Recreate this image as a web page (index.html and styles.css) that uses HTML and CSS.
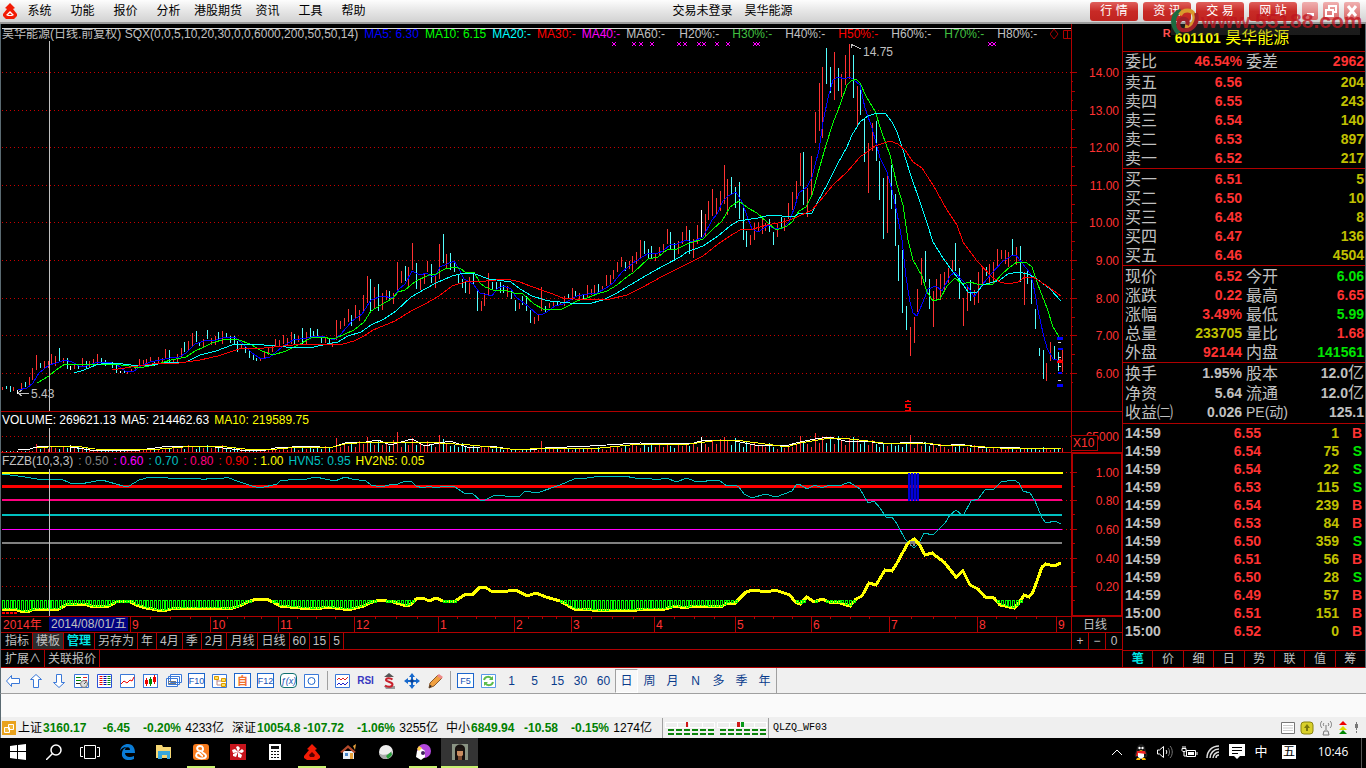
FILE: index.html
```html
<!DOCTYPE html>
<html lang="zh-CN">
<head>
    <meta charset="UTF-8">
    <meta name="viewport" content="width=device-width, initial-scale=1.0">
    <title>昊华能源</title>
    <link rel="stylesheet" href="styles.css">
</head>
<body>
    <header class="menubar">
        <svg class="logo" width="16" height="18" viewBox="0 0 16 18"><path d="M8 1l5 5-2 1 4 5v2l-3 3H4l-3-3v-2l4-5-2-1z" fill="#f21b05"/><path d="M4 13l4-4 4 4-2 1H6z" fill="#fff"/><path d="M6 13l2-2 2 2z" fill="#f21b05"/></svg>
        <nav class="menu">
            <button>系统</button><button>功能</button><button>报价</button><button>分析</button><button>港股期货</button><button>资讯</button><button>工具</button><button>帮助</button>
        </nav>
        <div class="caption"><span>交易未登录</span><span>昊华能源</span></div>
        <div class="window-buttons">
            <button class="tag">行 情</button><button class="tag">资 讯</button><button class="tag">交 易</button><button class="tag">网 站</button>
            <button class="win" aria-label="最小化"><svg width="16" height="16"><path d="M5 10h7v3H5z" fill="#fff"/></svg></button>
            <button class="win" aria-label="还原"><svg width="16" height="16" fill="none" stroke="#fff" stroke-width="2"><path d="M6 6V3h7v6h-3M3 7h7v6H3z"/></svg></button>
            <button class="win" aria-label="关闭"><svg width="16" height="16" stroke="#fff" stroke-width="3"><path d="M4 3l8 10M12 3L4 13"/></svg></button>
        </div>
        <div class="watermark">
            <svg width="28" height="30" viewBox="0 0 28 30" fill="none"><path d="M8 27C0 19 1 8 10 5" stroke="#1d6b41" stroke-width="5"/><path d="M9 9c3-6 12-6 14 0 2 7-3 12-9 11" stroke="#d99a2c" stroke-width="4"/><path d="M25 7c3 10-4 19-14 17-5-2-5-9 0-11 4-1 7 2 5 6" stroke="#a02028" stroke-width="4"/></svg>
            <span>www.55188.com</span>
        </div>
    </header>

    <main class="workspace">
        <section class="charts">
            <div class="panel price-panel">
                <svg id="price" viewBox="1 24 1121 387" preserveAspectRatio="none"></svg>
                <p class="legend clipped">
                    <span>昊华能源(日线.前复权) SQX(0,0,5,10,20,30,0,0,6000,200,50,50,14)</span>
                    <span class="blue">MA5: 6.30</span><span class="lime">MA10: 6.15</span><span class="cyan">MA20:-</span><span class="red">MA30:-</span><span class="magenta">MA40:-</span><span class="wide">MA60:-</span><span class="wide">H20%:-</span><span class="wide green">H30%:-</span><span class="wide">H40%:-</span><span class="wide red">H50%:-</span><span class="wide">H60%:-</span><span class="wide green">H70%:-</span><span class="wide">H80%:-</span><svg width="25" height="12" fill="none" stroke="#b00000"><path d="M4 0l4 5-4 5-4-5zM13.500 1.500h9v8h-9zM17.500 1v9"/></svg>
                </p>
            </div>
            <div class="panel volume-panel">
                <svg id="volume" viewBox="1 412 1121 40" preserveAspectRatio="none"></svg>
                <p class="legend"><span class="white">VOLUME: 269621.13</span><span class="white">MA5: 214462.63</span><span class="yellow">MA10: 219589.75</span></p>
            </div>
            <div class="panel fzzb-panel">
                <svg id="fzzb" viewBox="1 453 1121 163" preserveAspectRatio="none"></svg>
                <p class="legend"><span>FZZB(10,3,3)</span><span class="gray">: 0.50</span><span class="magenta">: 0.60</span><span class="teal">: 0.70</span><span class="pink">: 0.80</span><span class="red">: 0.90</span><span class="yellow">: 1.00</span><span class="teal">HVN5: 0.95</span><span class="yellow">HV2N5: 0.05</span></p>
            </div>
            <div class="panel dates-panel">
                <svg id="dates" viewBox="1 617 1121 15" preserveAspectRatio="none"></svg>
            </div>
            <nav class="tabs templates">
                <button>指标</button><button class="pressed">模板</button><button class="active">管理</button><button>另存为</button><button>年</button><button>4月</button><button>季</button><button>2月</button><button>月线</button><button>日线</button><button>60</button><button>15</button><button>5</button>
                <div class="zoomers"><button>+</button><button>−</button><button>0</button></div>
            </nav>
            <nav class="tabs extras"><button>扩展∧</button><button>关联报价</button></nav>
        </section>

        <aside class="quote">
            <h1><sup>R</sup><b>601101</b> 昊华能源</h1>
            <table class="figures">
                <tr><th>委比</th><td class="up">46.54%</td><th>委差</th><td class="up">2962</td></tr>
            </table>
            <table class="figures block">
                <tr><th>卖五</th><td class="up">6.56</td><th></th><td class="vol">204</td></tr>
                <tr><th>卖四</th><td class="up">6.55</td><th></th><td class="vol">243</td></tr>
                <tr><th>卖三</th><td class="up">6.54</td><th></th><td class="vol">140</td></tr>
                <tr><th>卖二</th><td class="up">6.53</td><th></th><td class="vol">897</td></tr>
                <tr><th>卖一</th><td class="up">6.52</td><th></th><td class="vol">217</td></tr>
            </table>
            <table class="figures block">
                <tr><th>买一</th><td class="up">6.51</td><th></th><td class="vol">5</td></tr>
                <tr><th>买二</th><td class="up">6.50</td><th></th><td class="vol">10</td></tr>
                <tr><th>买三</th><td class="up">6.48</td><th></th><td class="vol">8</td></tr>
                <tr><th>买四</th><td class="up">6.47</td><th></th><td class="vol">136</td></tr>
                <tr><th>买五</th><td class="up">6.46</td><th></th><td class="vol">4504</td></tr>
            </table>
            <table class="figures block">
                <tr><th>现价</th><td class="up">6.52</td><th>今开</th><td class="down">6.06</td></tr>
                <tr><th>涨跌</th><td class="up">0.22</td><th>最高</th><td class="up">6.65</td></tr>
                <tr><th>涨幅</th><td class="up">3.49%</td><th>最低</th><td class="down">5.99</td></tr>
                <tr><th>总量</th><td class="vol">233705</td><th>量比</th><td class="up">1.68</td></tr>
                <tr><th>外盘</th><td class="up">92144</td><th>内盘</th><td class="down">141561</td></tr>
            </table>
            <table class="figures block last">
                <tr><th>换手</th><td>1.95%</td><th>股本</th><td>12.0<span>亿</span></td></tr>
                <tr><th>净资</th><td>5.64</td><th>流通</th><td>12.0<span>亿</span></td></tr>
                <tr><th>收益㈡</th><td>0.026</td><th class="pe">PE(动)</th><td>125.1</td></tr>
            </table>
            <table class="ticks">
                <tr><td>14:59</td><td class="up">6.55</td><td class="vol">1</td><td class="up">B</td></tr>
                <tr><td>14:59</td><td class="up">6.54</td><td class="vol">75</td><td class="down">S</td></tr>
                <tr><td>14:59</td><td class="up">6.54</td><td class="vol">22</td><td class="down">S</td></tr>
                <tr><td>14:59</td><td class="up">6.53</td><td class="vol">115</td><td class="down">S</td></tr>
                <tr><td>14:59</td><td class="up">6.54</td><td class="vol">239</td><td class="up">B</td></tr>
                <tr><td>14:59</td><td class="up">6.53</td><td class="vol">84</td><td class="up">B</td></tr>
                <tr><td>14:59</td><td class="up">6.50</td><td class="vol">359</td><td class="down">S</td></tr>
                <tr><td>14:59</td><td class="up">6.51</td><td class="vol">56</td><td class="up">B</td></tr>
                <tr><td>14:59</td><td class="up">6.50</td><td class="vol">28</td><td class="down">S</td></tr>
                <tr><td>14:59</td><td class="up">6.49</td><td class="vol">57</td><td class="up">B</td></tr>
                <tr><td>15:00</td><td class="up">6.51</td><td class="vol">151</td><td class="up">B</td></tr>
                <tr><td>15:00</td><td class="up">6.52</td><td class="vol">0</td><td class="up">B</td></tr>
            </table>
            <nav class="quote-tabs"><button class="active">笔</button><button>价</button><button>细</button><button>日</button><button>势</button><button>联</button><button>值</button><button>筹</button></nav>
        </aside>
    </main>

    <div class="toolbar">
        <button aria-label="后退"><svg width="16" height="16"><path d="M1.500 8l5-5.500v3h8v5h-8v3z" fill="#fff" stroke="#3a78d8"/></svg></button>
        <button aria-label="上"><svg width="16" height="16"><path d="M8 1.500l5.500 5h-3v8h-5v-8h-3z" fill="#fff" stroke="#3a78d8"/></svg></button>
        <button aria-label="下"><svg width="16" height="16"><path d="M8 14.500l5.500-5h-3v-8h-5v8h-3z" fill="#fff" stroke="#3a78d8"/></svg></button>
        <button aria-label="报价"><svg width="16" height="16"><path d="M.5 1.500h14v13H.5z" fill="#fff" stroke="#3a78d8"/><g shape-rendering="crispEdges"><path d="M2 4h5M2 7h5" stroke="#080" stroke-width="1"/><path d="M9 4h4M9 7h4" stroke="#e22"/></g><path d="M2 10.500h4" stroke="#222"/><circle cx="10" cy="11" r="3.500" fill="#ddd" stroke="#777"/><path d="M10 11l2-2" stroke="#555"/></svg></button>
        <button aria-label="列表"><svg width="16" height="16"><path d="M.5 1.500h14v13H.5z" fill="#fff" stroke="#2a50d8"/><g stroke-width="3" stroke-dasharray="1 1"><path d="M4 3v10" stroke="#e00"/><path d="M8 3v10" stroke="#00a"/><path d="M12 3v10" stroke="#080"/></g></svg></button>
        <button aria-label="分时"><svg width="16" height="16" fill="#fff"><path d="M.5 1.500h14v13H.5z" stroke="#3a78d8"/><path d="M1 11l3-3 3 2 3-3 2 1 2-4" fill="none" stroke="#e00"/></svg></button>
        <button aria-label="K线"><svg width="16" height="16" shape-rendering="crispEdges"><path d="M.5 1.500h14v13H.5z" fill="#fff" stroke="#3a78d8"/><path d="M2 7h3v4H2zM3 5h1v8H3zM10 4h3v5h-3zM11 2h1v9h-1z" fill="#e00"/><path d="M6 6h3v5H6zM7 4h1v9H7z" fill="#080"/></svg></button>
        <button aria-label="窗口"><svg width="16" height="16" fill="#fff" stroke="#3a78d8"><path d="M4.500 1.500h11v8h-11zM2.500 3.500h11v8h-11zM.5 5.500h11v8H.5z"/><path d="M2 8.500h8M2 10.500h8" stroke="#777"/></svg></button>
        <button class="boxed">F10</button>
        <button aria-label="树"><svg width="16" height="16" fill="#fff"><path d="M.5 1.500h14v13H.5z" stroke="#3a78d8"/><path d="M5 6v6h5M5 8h5" fill="none" stroke="#b88"/><path d="M2.500 3.500h4v3h-4zM9.500 5.500h4v3h-4zM9.500 10.500h4v3h-4z" fill="#ffe45c" stroke="#d90"/></svg></button>
        <button class="boxed orange">自</button>
        <button class="boxed">F12</button>
        <button class="boxed fx">ƒ(x)</button>
        <button aria-label="圆"><svg width="16" height="16" fill="#fff"><path d="M.5 1.500h14v13H.5z" stroke="#3a78d8"/><circle cx="7.500" cy="8" r="3.500" stroke="#1d66cc" stroke-width="1"/></svg></button>
        <i class="sep"></i>
        <button aria-label="指标"><svg width="16" height="16" fill="none"><path d="M.5 1.500h14v13H.5z" fill="#fff" stroke="#3a78d8"/><path d="M2 7l2-2 2 2 2-2 2 2 3-3" stroke="#d22"/><path d="M2 12l2-2 2 2 2-2 2 2 3-3" stroke="#22c"/></svg></button>
        <button class="rsi">RSI</button>
        <button aria-label="买卖"><svg width="16" height="16"><path d="M3 13h11v3H5z" fill="#999"/><path d="M8 0l5 4H3z" fill="#555"/><path d="M11.500 6.500C9 4.500 5 5 5 7s6.500 1.500 6.500 4.500S6 14 4 12.500" fill="none" stroke="#c8202c" stroke-width="2"/></svg></button>
        <button aria-label="移动"><svg width="16" height="16"><path d="M8 0l3 4H9v3h3V5l4 3-4 3V9H9v3h2l-3 4-3-4h2V9H4v2L0 8l4-3v2h3V4H5z" fill="#1668cc"/><path d="M6.500 6.500h3v3h-3z" fill="#0a3d8c"/></svg></button>
        <button aria-label="画笔"><svg width="16" height="16"><path d="M2 15l1-5 8-8 4 3-8 8z" fill="#f0a040" stroke="#8a5a30"/><path d="M10 3l2-2 4 3-2 2z" fill="#e88"/><path d="M2 15l1-3 2 1z" fill="#222"/></svg></button>
        <i class="sep"></i>
        <button class="boxed">F5</button>
        <button aria-label="刷新"><svg width="16" height="16" fill="none"><path d="M.5 1.500h14v13H.5z" fill="#fff" stroke="#5a98e8"/><path d="M3 7c1-4 6-4 8-1M12 9c-1 4-6 4-8 1" stroke="#5cbb4c" stroke-width="2"/><path d="M12 3v4H8zM3 13V9h4z" fill="#5cbb4c"/></svg></button>
        <button>1</button><button>5</button><button>15</button><button>30</button><button>60</button><button class="on">日</button><button>周</button><button>月</button><button>N</button><button>多</button><button>季</button><button>年</button>
        <i class="sep end"></i>
    </div>
    <div class="blank"></div>

    <footer class="status">
        <svg width="14" height="14"><path d="M0 0h14v14H0z" fill="#e9a21d"/><path d="M6.500 3.500h5v5h-5zM2.500 6.500h5v5h-5z" fill="#f3b83c" stroke="#fff"/></svg>
        <div class="index"><span>上证</span><b>3160.17</b><b>-6.45</b><b>-0.20%</b><span>4233亿</span></div>
        <div class="index"><span>深证</span><b>10054.8</b><b>-107.72</b><b>-1.06%</b><span>3255亿</span></div>
        <div class="index"><span>中小</span><b>6849.94</b><b>-10.58</b><b>-0.15%</b><span>1274亿</span></div>
        <div class="meters">
            <svg width="103" height="16" shape-rendering="crispEdges"><path d="M1.500 2.500h49v5h-49zM53.500 2.500h49v5h-49z" fill="#eee" stroke="#fff"/><path d="M13.500 2v6M25.500 2v6M38.500 2v6M65.500 2v6M90.500 2v6" stroke="#fff"/><path d="M22 2h2v5h-2zM73 2h3v5h-3z" fill="#d01818"/><path d="M77 2h3v5h-3z" fill="#0a9a1a"/><g stroke="#0a820a" stroke-width="2" stroke-dasharray="6 2"><path d="M4 10h46M56 10h46M4 14h46M56 14h46"/></g></svg>
        </div>
        <span class="server">QLZQ_WF03</span>
        <div class="status-icons">
            <svg width="14" height="14"><path d="M.5 1.500h13v11H.5z" fill="#fff" stroke="#777"/><path d="M2 4.500h10M2 7h10M2 9.500h10" stroke="#ccc"/></svg>
            <svg width="14" height="14"><rect x="1" y="1" width="12" height="12" rx="3" fill="#d9d02a" stroke="#8a8410"/><path d="M7 3l3 4H8v3H6V7H4z" fill="#7c780c"/></svg>
            <svg width="14" height="16" fill="none" stroke="#777"><path d="M7 5v5M5 11h4l1 4H4zM3 1C1 3 1 6 3 8M11 1c2 2 2 5 0 7M5 3c-1 1-1 2 0 3M9 3c1 1 1 2 0 3" /></svg>
            <svg width="10" height="14"><path d="M5 0l4 4H1z" fill="#e00"/><path d="M5 5l4 4H1z" fill="#dd0"/><path d="M5 9l4 4H1z" fill="#080"/></svg>
            <svg width="6" height="12" fill="#777"><path d="M2 2h3v4H2zM3 0h1v8H3zM3 9h1v2H3z"/></svg>
        </div>
    </footer>

    <div class="taskbar">
        <button class="sys" aria-label="开始"><svg width="16" height="16" fill="#fff"><path d="M0 2l7-1v6H0zM8 1l8-1v7H8zM0 8h7v7l-7-1zM8 8h8v8l-8-1z"/></svg></button>
        <button class="sys" aria-label="搜索"><svg width="16" height="16" fill="none" stroke="#fff" stroke-width="1.500"><circle cx="10" cy="6" r="5"/><path d="M6.500 9.500L0 16"/></svg></button>
        <button class="sys" aria-label="任务视图"><svg width="20" height="14" fill="none" stroke="#fff"><path d="M4.500.5h11v13h-11zM3 2.500H.5v9H3M17 2.500h2.500v9H17"/></svg></button>
        <button aria-label="Edge"><svg width="16" height="16"><path d="M1 7C2 2 5 0 9 0c5 0 7 4 7 9H6c0 4 5 5 9 3v3c-6 3-13 0-12-6 0-3 2-5 5-6-4 0-6 2-7 4zM6 6h5c0-4-5-3-5 0z" fill="#0a7cd6"/></svg></button>
        <button aria-label="资源管理器"><svg width="18" height="16"><path d="M1 1h6l1 2h8v11H1z" fill="#f6d774"/><path d="M3 7h12v8h-3v-4H7v4H3z" fill="#38a7dd"/></svg></button>
        <button class="running" aria-label="UC"><svg width="16" height="16"><rect width="16" height="16" rx="3" fill="#f77a1c"/><g fill="none" stroke="#fff" stroke-width="2"><path d="M8 7C3 7 3 2 7 2c3 0 4 3 2 5-1 2 4 2 4 5s-6 3-9 1c-2-2 0-5 2-4s2 3 4 3"/></g></svg></button>
        <button aria-label="花"><svg width="16" height="16"><path d="M0 0h16v16H0z" fill="#c8141c"/><path d="M8 8L6 3l2-1 2 2zM8 8l4-3 2 2-2 2zM8 8l4 3-1 3-3-1zM8 8l-2 5-3-1v-2zM8 8L3 9 2 6l3-1z" fill="#fff"/></svg></button>
        <button aria-label="计算器"><svg width="12" height="16"><path d="M0 0h12v16H0z" fill="#fff"/><path d="M2 2h8v3H2z" fill="#111"/><g stroke="#111" stroke-dasharray="2 1"><path d="M2 7.500h8M2 10.500h8M2 13.500h8"/></g></svg></button>
        <button class="running" aria-label="行情"><svg width="16" height="18" viewBox="0 0 16 18"><path d="M8 1l5 5-2 1 5 6v2l-3 2H3l-3-2v-2l5-6-2-1z" fill="#f21b05"/><path d="M5 12l3-3 3 3-1 2H6z" fill="#500"/></svg></button>
        <button aria-label="房子"><svg width="17" height="16"><path d="M3 7h11v8H3z" fill="#e8eef8"/><path d="M0 8l8-7 8 7-2 1-6-5-6 5z" fill="#b44a2c"/><path d="M5 9h3v3H5z" fill="#4a88cc"/><path d="M10 9h3v6h-3zM13 2l3-2-1 6z" fill="#e8a23c"/></svg></button>
        <button aria-label="球"><svg width="16" height="16"><circle cx="8" cy="8" r="7" fill="#eee"/><path d="M1 9c3 3 10 2 13-2 1 5-3 8-7 8-3 0-5-2-6-6z" fill="#aaa"/><path d="M8 12l5-4 1 3-4 4z" fill="#27a03a"/></svg></button>
        <button class="running" aria-label="助手"><svg width="16" height="16"><circle cx="9" cy="7" r="7" fill="#b347dd"/><path d="M2 7l4-3 4 3v6l-4 3-5-3z" fill="#fff"/><path d="M4 2l3 2-3 3-2-2z" fill="#ffd34a"/><circle cx="8" cy="9" r="2" fill="#402060"/></svg></button>
        <button class="current" aria-label="头像"><svg width="16" height="16"><path d="M0 0h16v16H0z" fill="#8a9484"/><path d="M3 16V5c0-6 10-6 10 0v11z" fill="#17110f"/><path d="M5 6h6v5l-3 3-3-3z" fill="#c98c60"/><path d="M5 4h6v3H5z" fill="#201612"/><path d="M6 12h4v4H6z" fill="#7a4a30"/></svg></button>
        <div class="tray">
            <button aria-label="更多"><svg width="12" height="8" fill="none" stroke="#fff"><path d="M1 7l5-5 5 5"/></svg></button>
            <button aria-label="QQ"><svg width="14" height="16"><path d="M3 6c0-7 8-7 8 0l2 5-1 2-2-1v3H4v-3l-2 1-1-2z" fill="#111" stroke="#444" stroke-width=".5"/><path d="M4 9h6v4l-3 2-3-2z" fill="#fff"/><path d="M3 7h8l1 3-8-1v3H2z" fill="#e22"/><circle cx="5.500" cy="4" r="1.200" fill="#fff"/><circle cx="8.500" cy="4" r="1.200" fill="#fff"/><path d="M5 6h4l-2 1zM3 14h3v2H2zM8 14h3l1 2H8z" fill="#fb0"/></svg></button>
            <button aria-label="音量"><svg width="16" height="14" fill="none" stroke="#fff"><path d="M.5 5v4h2l4 3.500v-11L2.500 5z"/><path d="M9 5c1 1 1 3 0 4"/><path d="M11 3c2 2 2 6 0 8M13 1c3 3 3 9 0 12" stroke="#777"/></svg></button>
            <button aria-label="电源"><svg width="17" height="13" fill="none" stroke="#fff"><path d="M5.500 4.500h9v6h-9zM16 6v3M1 2.500h4v2c0 1.500-4 1.500-4 0zM2 0v2M4 0v2M3 6v4h2"/><path d="M7 6h6v3H7z" fill="#fff" stroke="none"/></svg></button>
            <button aria-label="网络"><svg width="14" height="14" fill="none" stroke="#ddd" stroke-width="1.500"><path d="M1 13C1 6 6 1 13 1M4 13c0-5 4-9 9-9M7 13c0-3 3-6 6-6M10 13c0-2 1-3 3-3"/></svg></button>
            <button aria-label="通知"><svg width="16" height="16"><path d="M0 0h16v12h-5l-3 3-3-3H0z" fill="#fff"/><path d="M3 3.500h10M3 6.500h10M3 9.500h6" stroke="#000"/></svg></button>
            <button>中</button>
            <button class="ime"><span>五</span></button>
            <time>10:46</time>
        </div>
    </div>

    <script src="script.js"></script>
</body>
</html>
```
FILE: styles.css
```css
* {
    box-sizing: border-box;
    margin: 0;
    padding: 0;
}
body {
    display: flex;
    flex-direction: column;
    min-height: 100vh;
    background: #000;
    color: #c0c0c0;
    font-family: "Liberation Sans", "Noto Sans CJK SC", sans-serif;
    font-size: 12px;
    line-height: 16px;
}
button {
    border: none;
    background: none;
    color: inherit;
    font: inherit;
    white-space: nowrap;
}
svg {
    display: block;
    flex-shrink: 0;
}

/* colours */
.blue { color: #0000ff; }
.lime { color: #00ff00; }
.green { color: #40c040; }
.cyan { color: #00ffff; }
.teal { color: #00c0c0; }
.red { color: #ff0000; }
.pink { color: #ff0080; }
.magenta { color: #ff00ff; }
.yellow { color: #ffff00; }
.white { color: #ffffff; }
.gray { color: #808080; }
.up { color: #ff3232; }
.down { color: #00e600; }
.vol { color: #c0c000; }

/* menu bar */
.menubar {
    position: relative;
    display: flex;
    align-items: center;
    height: 24px;
    padding: 0 6px 0 2px;
    background: linear-gradient(#fdfdfd, #e6e6e6 50%, #d2d2d2);
    border-bottom: 2px solid #9a9a9a;
    color: #000;
}
.menu {
    display: flex;
}
.menu button {
    min-width: 43px;
    padding: 0 4px;
}
.caption {
    display: flex;
    flex: 1;
    justify-content: center;
    gap: 12px;
}
.window-buttons {
    display: flex;
    gap: 5px;
}
.tag {
    width: 48px;
    height: 19px;
    border-radius: 3px;
    background: linear-gradient(#e0605c, #c82a26 50%, #c02420);
    color: #fff;
    font-size: 12px;
    line-height: 19px;
}
.win {
    width: 16px;
    height: 18px;
    border-radius: 2px;
    background: linear-gradient(#f0b0b0, #d86464);
}
.watermark {
    position: absolute;
    top: 6px;
    right: 6px;
    display: flex;
    align-items: center;
    gap: 2px;
    width: 189px;
    height: 29px;
    background: linear-gradient(rgba(90, 90, 90, 0) 62%, rgba(90, 90, 90, .3) 62%);
    color: rgba(190, 20, 30, .75);
    font-size: 21px;
    font-weight: bold;
    line-height: 26px;
    pointer-events: none;
}

/* charts */
.workspace {
    display: flex;
    border-left: 1px solid #5a6a72;
}
.charts {
    flex: 1;
    min-width: 0;
}
.panel {
    position: relative;
    border-bottom: 1px solid #b00000;
}
.panel > svg {
    width: 100%;
    shape-rendering: crispEdges;
}
.price-panel > svg { height: 387px; }
.volume-panel > svg { height: 40px; }
.fzzb-panel > svg { height: 163px; }
.dates-panel > svg { height: 15px; }
.panel .dots {
    shape-rendering: geometricPrecision;
}
.panel text {
    fill: #ff3232;
    font-size: 12px;
}
.panel text.note {
    fill: #c0c0c0;
}
.panel text.end {
    text-anchor: end;
}
.legend {
    position: absolute;
    top: 0;
    left: 1px;
    display: flex;
    gap: 5px;
    white-space: nowrap;
}
.clipped {
    top: 4px;
    right: 51px;
    gap: 6px;
    height: 14px;
    line-height: 10px;
    border-top: 1px solid #d8d8d8;
    overflow: hidden;
}
.clipped .wide {
    min-width: 47px;
}
.tabs {
    display: flex;
    height: 17px;
    padding-left: 1px;
    border-bottom: 1px solid #b00000;
}
.extras {
    height: 18px;
}
.tabs button {
    padding: 0 3px;
    border-right: 1px solid #b00000;
}
.pressed {
    background: #2c2c2c;
}
.active {
    color: #00e6e6;
    font-weight: bold;
}
.zoomers {
    display: flex;
    width: 51px;
    margin-left: auto;
    border-left: 1px solid #b00000;
}
.zoomers button {
    flex: 1;
}
.zoomers button:last-child {
    border-right: none;
}

/* quote panel */
.quote {
    display: flex;
    flex-direction: column;
    width: 244px;
    border-left: 1px solid #b00000;
    border-right: 1px solid #5a6a72;
}
.quote h1 {
    height: 28px;
    padding: 4px 36px 0 0;
    border-bottom: 1px solid #b00000;
    color: #ffff00;
    font-size: 16px;
    font-weight: normal;
    line-height: 20px;
    text-align: center;
}
.quote h1 b {
    font-size: 14px;
}
.quote h1 sup {
    padding-right: 4px;
    color: #ff5050;
    font-size: 11px;
    font-weight: bold;
    line-height: 10px;
}
.quote table {
    width: 100%;
    border-collapse: collapse;
    table-layout: fixed;
    white-space: nowrap;
    font-size: 14px;
    font-weight: bold;
}
.figures {
    border-bottom: 1px solid #b00000;
    line-height: 19px;
}
.figures tr {
    height: 19px;
}
.figures th {
    width: 50px;
    padding-left: 2px;
    font-size: 16px;
    font-weight: normal;
    text-align: left;
}
.figures td {
    text-align: right;
}
.figures td:nth-child(2) {
    width: 69px;
}
.figures th:nth-child(3) {
    padding-left: 4px;
}
.figures td:last-child {
    padding-right: 1px;
}
.figures td span {
    font-size: 16px;
    font-weight: normal;
}
.figures .pe {
    font-size: 14px;
}
.block tr:first-child {
    height: 20px;
}
.last tr:last-child {
    height: 20px;
}
.ticks {
    line-height: 18px;
}
.ticks tr {
    height: 18px;
}
.ticks td {
    width: 60px;
    text-align: right;
}
.ticks td:first-child {
    padding-left: 2px;
    text-align: left;
}
.ticks td:nth-child(2) {
    width: 78px;
}
.ticks td:nth-child(3) {
    width: 78px;
}
.ticks td:last-child {
    width: 26px;
    padding-right: 3px;
}
.quote-tabs {
    display: flex;
    height: 18px;
    margin-top: auto;
    border-top: 1px solid #b00000;
    border-bottom: 1px solid #b00000;
}
.quote-tabs button {
    flex: 1;
    border-right: 1px solid #b00000;
}
.quote-tabs button:last-child {
    border-right: none;
}

/* toolbar */
.toolbar {
    display: flex;
    align-items: center;
    height: 26px;
    background: #f0f0f0;
    border-left: 1px solid #5a6a72;
    border-bottom: 1px solid #a0a0a0;
    color: #0a3c8c;
}
.toolbar button {
    display: flex;
    align-items: center;
    justify-content: center;
    flex-shrink: 0;
    width: 23px;
    height: 24px;
}
.toolbar .boxed {
    width: 17px;
    height: 15px;
    margin: 0 3px;
    border: 1px solid #1d66cc;
    background: #fff;
    color: #1450b4;
    font-size: 9px;
}
.toolbar .orange {
    color: #f07030;
    font-size: 11px;
    font-weight: bold;
}
.toolbar .fx {
    border-radius: 4px;
    border-color: #107070;
    font-style: italic;
}
.toolbar .rsi {
    color: #3838c0;
    font-size: 10px;
    font-weight: bold;
}
.toolbar .on {
    background: #f8f8f8;
    border: 1px solid #a0a0a0;
    border-right-color: #fff;
    border-bottom-color: #fff;
}
.sep {
    width: 8px;
    height: 19px;
    background: linear-gradient(#a0a0a0, #a0a0a0) 4px 0 / 1px 100% no-repeat;
}
.end {
    height: 25px;
    background-position: 0 0;
}
.blank {
    height: 23px;
    background: #fafafa;
    border-left: 1px solid #5a6a72;
}

/* status bar */
.status {
    display: flex;
    align-items: center;
    height: 21px;
    padding-left: 1px;
    background: #efefef;
    border-left: 1px solid #5a6a72;
    color: #000;
    white-space: nowrap;
}
.index {
    display: grid;
    grid-template-columns: 25px 46px 41px 51px 43px 6px;
    padding-left: 2px;
}
.index b {
    color: #008000;
}
.index b + b,
.index b + span {
    text-align: right;
}
.meters {
    margin-left: 4px;
    padding: 2px 1px;
    border-left: 1px solid #a0a0a0;
    border-right: 1px solid #a0a0a0;
}
.server {
    padding-left: 4px;
    font-family: "Liberation Mono", monospace;
    font-size: 10px;
}
.status-icons {
    display: flex;
    align-items: center;
    gap: 5px;
    margin-left: auto;
    padding-right: 7px;
}

/* taskbar */
.taskbar {
    display: flex;
    height: 30px;
    background: #000;
    color: #fff;
}
.taskbar button {
    display: flex;
    align-items: center;
    justify-content: center;
    width: 37px;
    border-bottom: 2px solid transparent;
}
.taskbar .sys {
    width: 36px;
}
.taskbar .running {
    background: linear-gradient(#c8f070, #c8f070) 50% 100% / 28px 2px no-repeat border-box;
}
.taskbar .current {
    background: #343434;
    border-bottom-color: #c8f070;
}
.tray {
    display: flex;
    margin-left: auto;
    padding-right: 4px;
}
.tray button {
    width: 24px;
    font-size: 13px;
}
.taskbar .ime {
    width: 32px;
}
.ime span {
    width: 14px;
    height: 14px;
    background: #fff;
    color: #000;
    line-height: 14px;
    font-size: 12px;
}
.tray time {
    width: 57px;
    border-right: 1px solid #555;
    font-family: "Open Sans", sans-serif;
    line-height: 28px;
    text-align: center;
}
```
FILE: script.js
```js
// Horizontal distance between two trading days
const STEP = 3.798;
const dayX = (i) => Math.round(2 + i * STEP) + 0.5;

// One entry per trading day: colour (r up, c down, w flat), high y, low y
const candles = `r387-390 c386-389 c386-392 r387-391 w390-394 r383-391 c382-387 r377-386 r368-380 r355-370
c363-368 r361-368 r361-368 r354-365 r356-366 c348-361 r358-363 c358-369 w366-370 r363-369
c364-369 r358-366 c361-368 r361-367 r359-363 r354-364 c358-363 c360-366 c362-365 c362-368
c365-373 w371-373 c370-373 r371-374 r369-372 r365-370 r359-368 r360-364 r359-363 r357-362
c362-366 r357-363 r358-363 r349-359 c350-363 r359-364 r354-362 r348-357 c342-352 r341-351
r333-346 c331-342 c342-346 r339-347 c330-339 r338-345 r336-345 c332-341 r331-344 c333-338
c336-343 c336-344 c341-352 r344-349 c347-353 c350-358 c355-360 c358-361 r359-361 r352-358
r348-355 r345-352 r339-347 r340-346 r335-344 r338-346 r332-344 c334-344 r336-342 c328-344
r332-344 c328-339 c331-337 c329-336 c336-343 r338-343 c339-344 r342-347 r320-340 r321-329
r318-326 r309-322 c315-326 r305-319 r310-321 r295-313 r276-303 c279-311 r287-309 c284-311
r293-310 r290-300 c291-301 r293-304 r262-290 r271-283 c266-281 r267-286 r243-270 c263-289
r279-290 r273-284 r261-272 c264-283 r276-288 r244-279 c234-263 r254-268 c253-270 c261-272
c275-284 c279-288 c282-293 r277-294 c274-285 c290-311 r301-311 r293-306 r273-295 c282-290
c282-290 c282-293 c285-293 r286-297 c289-299 c300-311 r303-309 c296-305 c296-311 c310-323
r317-324 r315-321 r287-311 c306-313 r303-308 r302-306 c302-305 r302-305 r296-306 c294-299
r288-300 c291-297 r293-299 c294-299 r285-297 r289-295 r285-293 c284-293 r286-289 r275-286
r275-285 r270-279 r262-272 r257-267 c262-271 r261-269 r256-272 r252-264 r240-258 c241-254
c249-258 c246-258 r254-261 r247-256 r244-253 r229-244 c232-250 c243-261 r241-254 r232-244
r226-241 c230-254 r239-258 r225-244 w210-238 r214-237 r201-220 r189-216 r198-214 r191-211
r165-204 r179-215 c177-194 c187-208 c182-219 c208-240 c231-247 r235-245 r223-240 r222-232
r219-234 r223-231 c219-232 c232-245 r224-237 c217-228 r218-231 r203-219 r192-210 r181-200
r153-186 c152-205 r188-217 r156-196 r112-143 r83-131 r67-138 c48-84 c67-93 r52-100
c68-91 r74-97 r55-85 r44-79 c55-98 r86-127 c84-115 c119-162 r143-193 r123-151
c121-161 c161-200 c178-239 r173-233 c165-209 c194-246 c245-281 c250-313 c306-330 r327-356
r317-343 r289-312 r258-285 c251-282 c279-309 r291-327 r279-301 r274-300 r272-291 r268-283
r260-272 c243-271 c268-299 r298-326 r285-311 c280-301 r290-305 r272-303 r267-286 c267-276
r264-285 r262-284 r249-267 r250-259 r250-264 r252-267 c239-255 r247-265 c246-282 r272-305
c270-284 c276-304 c309-329 c348-356 c350-379 r363-381 r342-361 c346-360 c352-371 r350-372`
    .split(/\s+/)
    .map((s) => ({ kind: s[0], range: s.slice(1).split("-").map(Number) }));

const candleColor = { r: "#ff3232", c: "#54ffff", w: "#ffffff" };

const averages = {
    "#0000ff": "18,390 27,388 33,383 39,373 49,365 56,363 65,360 72,362 79,366 86,366 98,362 108,362 116,364 125,371 133,372 141,366 150,362 170,358 179,357 186,353 195,344 207,340 216,340 225,337 235,337 243,344 252,353 261,359 270,357 282,347 293,340 307,338 316,336 325,337 334,340 341,334 352,321 362,314 371,300 382,296 393,298 399,289 405,284 412,271 420,275 427,273 432,277 436,275 440,267 454,261 459,269 464,279 473,284 480,293 492,296 498,288 504,286 511,289 516,297 529,307 538,315 543,314 547,312 555,306 563,304 577,296 588,294 597,293 606,288 613,283 622,272 633,263 647,254 658,253 663,251 670,245 677,244 686,240 692,242 703,237 712,220 717,214 723,201 728,196 736,192 742,202 748,219 752,229 758,232 763,229 768,225 775,229 783,228 789,222 794,209 799,193 807,187 812,177 815,165 819,150 823,122 828,98 833,80 838,77 845,79 849,77 853,79 860,85 865,108 872,128 880,158 887,172 892,190 897,213 902,240 906,277 910,302 913,313 917,316 925,297 928,289 936,286 942,291 950,276 955,272 962,280 967,285 974,297 982,285 992,273 1003,261 1013,255 1016,255 1022,263 1030,273 1033,283 1038,310 1043,333 1047,348 1053,359 1061,361",
    "#00ff00": "37,383 49,376 56,370 65,364 98,364 112,364 129,366 139,368 154,365 171,360 186,357 195,351 204,347 212,343 225,339 239,340 250,344 262,351 273,355 286,351 298,345 311,338 321,337 334,339 345,334 354,330 364,322 371,311 386,302 393,298 398,292 405,290 416,281 429,275 436,274 445,269 455,267 461,269 465,272 474,272 480,283 485,287 493,290 504,290 514,293 523,294 534,304 543,309 550,310 562,309 568,306 577,301 587,298 597,294 607,291 617,285 628,276 633,273 648,259 658,257 668,249 677,249 687,244 703,239 713,229 722,221 730,207 739,201 748,208 757,213 767,222 776,230 787,226 793,221 799,211 806,207 812,195 818,173 826,145 833,123 840,105 847,85 851,81 856,79 860,83 867,98 875,111 882,133 890,155 897,185 903,205 908,240 913,260 922,276 927,292 933,301 940,299 947,286 955,278 962,284 970,282 977,284 993,284 1002,274 1010,267 1017,262 1027,263 1032,267 1038,285 1047,308 1053,327 1061,340",
    "#00ffff": "74,373 84,370 96,365 107,363 123,364 138,366 152,365 164,363 186,362 200,355 216,351 232,345 246,344 264,345 286,347 314,347 327,344 338,342 348,336 361,332 371,325 384,319 396,311 411,297 425,289 436,283 452,276 464,273 475,274 489,279 504,281 511,282 520,289 532,296 545,300 550,301 570,303 588,304 603,300 617,293 630,285 647,275 663,266 680,257 687,252 703,246 718,236 730,226 738,221 758,218 770,215 793,217 800,213 812,213 817,203 827,185 837,165 847,147 852,135 860,122 868,116 877,113 885,113 892,122 897,132 903,150 910,173 920,202 927,223 933,242 943,258 953,272 962,283 968,292 977,292 983,285 993,282 1000,280 1008,274 1018,272 1028,274 1037,279 1050,289 1061,301",
    "#ff0000": "112,370 125,368 138,366 152,364 179,363 200,360 218,356 239,349 264,348 293,345 311,344 343,344 354,341 364,336 373,330 395,321 411,311 425,304 439,296 452,286 468,281 486,281 507,279 520,282 530,286 550,293 563,298 587,300 610,299 627,295 643,287 663,276 687,264 703,256 718,244 730,236 740,230 753,229 767,225 783,222 795,218 812,210 819,202 833,185 847,172 860,157 875,146 890,141 898,144 905,150 913,162 922,168 933,185 947,210 957,225 963,242 977,261 992,277 1000,282 1008,284 1018,282 1025,277 1033,277 1047,286 1061,296"
};

const volumeWhite = "18,450 30,449 40,446 65,446 90,450 140,450 170,446 200,446 215,447 240,450 262,451 275,448 310,446 330,448 345,443 352,442 360,443 378,440 390,445 412,439 425,446 434,444 450,441 470,448 490,446 510,449 530,450 545,448 590,446 640,443 690,444 705,440 730,440 745,443 755,445 785,446 800,442 815,439 830,437 845,441 865,441 885,444 915,442 945,446 958,444 985,448 1000,447 1040,449 1061,448";
const volumeYellow = "37,448 60,446 75,446 95,449 135,450 160,449 195,446 218,446 245,449 265,450 300,447 333,447 345,444 370,442 400,442 440,443 470,445 500,448 520,450 540,448 560,448 600,448 630,445 690,444 712,441 735,440 750,442 780,446 790,446 800,443 830,438 850,439 868,441 890,444 925,443 940,445 970,446 1000,448 1061,448";
// Day index -> top of a volume spike
const volumeSpikes = { 9: 444, 88: 438, 96: 437, 104: 432, 108: 438, 115: 435, 116: 439, 142: 441, 184: 437, 190: 437, 210: 436, 214: 433, 224: 437, 239: 435 };

const hvn = "2,474 10,475 25,477 37,479 61,479 70,483 80,484 102,480 123,486 129,486 134,483 139,480 150,477 168,478 179,479 198,478 204,480 209,478 221,479 227,477 234,480 243,483 252,486 260,488 277,484 280,481 297,479 302,480 316,477 325,479 335,481 345,477 352,479 366,481 371,485 381,487 389,485 398,484 405,481 412,482 416,486 423,488 429,486 435,488 445,486 455,487 464,493 473,494 480,500 485,500 495,495 514,497 520,496 525,491 537,493 560,485 567,482 574,479 587,478 594,477 624,476 635,478 649,478 655,480 667,478 676,482 687,478 694,481 703,482 710,480 719,480 727,486 735,485 739,487 744,494 752,498 765,494 776,497 792,491 796,485 799,484 807,489 815,485 822,488 829,485 842,485 849,482 860,489 868,503 874,501 880,508 886,517 892,517 897,524 905,539 914,548 919,543 924,533 933,535 945,523 950,515 956,510 963,516 971,501 978,499 985,490 994,489 1001,482 1014,480 1019,483 1023,491 1030,493 1035,501 1042,518 1046,523 1055,521 1061,524";
const hv2n = "2,609 14,609 20,611 27,612 34,609 59,609 66,605 84,604 94,607 109,606 116,602 129,601 136,605 146,608 163,611 171,609 186,608 211,608 230,609 239,606 250,601 257,599 266,599 273,602 280,606 300,608 316,609 327,607 343,609 352,609 364,606 370,603 380,600 393,602 407,606 412,604 416,599 423,598 429,601 436,598 443,601 455,601 466,594 473,594 480,587 485,587 491,591 500,592 516,590 527,596 536,593 546,597 560,601 567,605 574,609 592,610 603,611 614,610 637,610 649,609 665,609 676,606 685,608 692,606 721,607 727,603 735,603 739,599 746,592 753,590 767,592 775,590 790,595 795,602 800,604 807,597 814,602 822,599 829,602 840,603 850,606 856,599 862,596 869,583 876,585 885,570 892,571 897,563 908,543 914,539 919,544 925,555 932,553 944,562 956,577 963,571 970,585 978,589 985,597 994,598 1000,605 1014,608 1019,603 1024,595 1029,597 1033,592 1042,567 1046,564 1054,566 1061,563";

const line = (x1, y1, x2, y2, color, width = 1, dash = "none") =>
    `<line x1="${x1}" y1="${y1}" x2="${x2}" y2="${y2}" stroke="${color}" stroke-width="${width}" stroke-dasharray="${dash}"/>`;
const dots = (y) =>
    `<line class="dots" x1="2" y1="${y}" x2="1071" y2="${y}" stroke="#c80000" stroke-dasharray="1 3"/>`;
const curve = (points, color, width = 1) =>
    `<polyline points="${points}" fill="none" stroke="${color}" stroke-width="${width}"/>`;
const text = (x, y, value, cls = "") => `<text x="${x}" y="${y}" class="${cls}">${value}</text>`;

// y of a curve at any x
const valueAt = (points, x) => {
    const p = points.split(" ").map((s) => s.split(",").map(Number));
    let k = p.findIndex((q) => q[0] >= x);
    if (k < 0) k = p.length - 1;
    if (k === 0) return p[0][1];
    const [a, b] = [p[k - 1], p[k]];
    return a[1] + ((b[1] - a[1]) * (x - a[0])) / (b[0] - a[0]);
};

const RED = "#b00000";

function drawPrice() {
    let out = "";
    for (let i = 0; i <= 8; i++) {
        const y = Math.round(72 + i * 37.6) + 0.5;
        out += dots(y);
        out += line(1071, y, 1077, y, RED);
        out += text(1119, y + 4, (14 - i).toFixed(2), "end");
        [9, 19, 28].forEach((d) => {
            if (y + d < 390) out += line(1071, y + d, d === 19 ? 1075 : 1073, y + d, RED);
        });
    }
    out += line(1071.5, 24, 1071.5, 411, RED);
    candles.forEach((c, i) => {
        out += line(dayX(i), c.range[0], dayX(i), c.range[1], candleColor[c.kind]);
    });
    for (const color in averages) out += curve(averages[color], color);
    out += line(49.5, 41, 49.5, 411, "#c0c0c0");
    out += `<path d="M851 48v-3h3M851 44l10 5M18 393h11M18 393l4-3M18 393l4 3" stroke="#c0c0c0" fill="none"/>`;
    out += text(863, 56, "14.75", "note") + text(31, 398, "5.43", "note");
    [614, 634, 641, 652, 679, 685, 699, 704, 717, 728, 755, 758, 990, 994].forEach((x) => {
        out += `<path d="M${x - 2} 42l4 4M${x + 2} 42l-4 4" stroke="#ff00ff"/>`;
    });
    // sell mark
    out += `<path d="M907 400h2v1h2v1h-6v-1h2zM905 404h6v1h-6zM905 405h2v2h-2zM905 407h6v1h-6zM909 408h2v2h-2zM905 410h6v1h-6z" fill="#f00"/>`;
    out += `<path d="M1057 337h6v3h-6zM1058 348h5v2h-5zM1058 372h4v2h-4zM1057 384h6v3h-6z" fill="#00f"/><path d="M1057 361l3-2 3 2v2h-6z" fill="#f00"/>`;
    out += `<path d="M1058 342.500h3M1058 357.500h3M1058 366.500h3M1058 380.500h3" stroke="#ddd"/>`;
    document.querySelector("#price").innerHTML = out;
}

function drawVolume() {
    let out = dots(436.5);
    const wave = [1.1, 0.7, 0.9, 0.6, 1.2, 0.8, 0.5, 1, 0.7];
    candles.forEach((c, i) => {
        const x = dayX(i);
        const base = i < 9 ? 1 : 452 - valueAt(volumeYellow, x);
        const top = volumeSpikes[i] ?? 452 - Math.max(1, base * wave[i % wave.length]);
        out += line(x, top, x, 452, candleColor[c.kind]);
    });
    out += curve(volumeWhite, "#fff") + curve(volumeYellow, "#ff0");
    out += line(1071.5, 412, 1071.5, 452, RED) + line(1071, 436.5, 1077, 436.5, RED);
    out += line(49.5, 428, 49.5, 452, "#c0c0c0");
    out += text(1119, 441, "65000", "end");
    out += `<rect x="1071.500" y="435.500" width="26" height="15" fill="#000" stroke="${RED}"/>` + text(1073, 447, "X10");
    document.querySelector("#volume").innerHTML = out;
}

function drawFzzb() {
    let out = "";
    [472, 500, 529, 558, 586].forEach((y, i) => {
        out += dots(y + 0.5);
        out += line(1071, y + 0.5, 1077, y + 0.5, RED) + line(1071, y + 14.5, 1075, y + 14.5, RED);
        out += text(1119, y + 5, (1 - i * 0.2).toFixed(2), "end");
    });
    out += `<path d="M1072 453v163" stroke="${RED}" stroke-width="2"/><path d="M1071 615.500h51M1071 453.500h51M1121.500 453v163" stroke="${RED}" fill="none"/>`;
    out += line(2, 473, 1063, 473, "#ff0", 2) + line(2, 486.5, 1062, 486.5, "#f00", 3);
    out += line(2, 500, 1062, 500, "#ff0080", 2) + line(2, 515, 1062, 515, "#00c0c0", 2);
    out += line(2, 529.5, 1062, 529.5, "#ff00ff") + line(2, 543, 1062, 543, "#808080", 2);
    out += `<path d="M909 473v28M912 473v28M915 473v28M918 473v28" stroke="#00f" stroke-width="2"/><path d="M908 474h11v26h-11z" fill="#0000c0" opacity=".6"/>`;
    out += curve(hvn, "#00c0c0") + curve(hv2n, "#ff0", 3);
    // hollow green columns hang from the 0.10 level
    candles.forEach((c, i) => {
        const x = dayX(i);
        const y = Math.round(valueAt(hv2n, x));
        if (y > 600) out += `<rect x="${x}" y="600.500" width="2" height="${Math.max(2, y - 601)}" fill="none" stroke="#0f0"/>`;
    });
    out += line(2, 612.5, 18, 612.5, "#f00", 2, "3 1");
    out += `<path d="M910 546v-5h3v5M914 541v5" fill="none" stroke="#888"/>`;
    out += line(49.5, 469, 49.5, 616, "#c0c0c0");
    document.querySelector("#fzzb").innerHTML = out;
}

function drawDates() {
    let out = text(3, 629, "2014年");
    out += `<rect x="49" y="617" width="79" height="14" fill="#000080"/>` + text(51, 628, "2014/08/01/五", "note");
    const months = { 130: 9, 210: 10, 278: 11, 354: 12, 438: 1, 514: 2, 571: 3, 654: 4, 735: 5, 811: 6, 889: 7, 977: 8, 1056: 9 };
    const xs = Object.keys(months).map(Number);
    xs.forEach((x, i) => {
        out += line(x + 0.5, 617, x + 0.5, 632, RED) + text(x + 2, 629, months[x]);
        const gap = ((xs[i + 1] ?? x) - x) / 4;
        for (let k = 1; k < 4 && gap; k++) out += line(x + gap * k, 617, x + gap * k, 619, RED);
    });
    out += line(1071.5, 617, 1071.5, 632, RED) + text(1083, 629, "日线", "note");
    document.querySelector("#dates").innerHTML = out;
}

drawPrice();
drawVolume();
drawFzzb();
drawDates();
```
